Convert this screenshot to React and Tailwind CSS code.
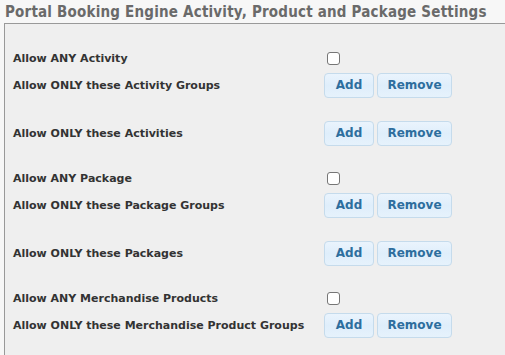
const rows = [
  { label: 'Allow ANY Activity', type: 'check' },
  { label: 'Allow ONLY these Activity Groups', type: 'buttons' },
  { spacer: true },
  { label: 'Allow ONLY these Activities', type: 'buttons' },
  { spacer: true },
  { label: 'Allow ANY Package', type: 'check' },
  { label: 'Allow ONLY these Package Groups', type: 'buttons' },
  { spacer: true },
  { label: 'Allow ONLY these Packages', type: 'buttons' },
  { spacer: true },
  { label: 'Allow ANY Merchandise Products', type: 'check' },
  { label: 'Allow ONLY these Merchandise Product Groups', type: 'buttons' },
]

const Btn = ({ children, w }) => (
  <button
    className={`${w} h-[25px] rounded-[4px] border border-[#c5dbec] bg-gradient-to-b from-[#eaf4fd] via-[#dfeefb] to-[#e6f2fc] text-[12px] font-bold text-[#2e6e9e]`}
  >
    {children}
  </button>
)

export default function App() {
  return (
    <div className="h-[355px] w-[505px] overflow-hidden bg-[#f7f7f7] font-['DejaVu_Sans',Verdana,sans-serif]">
      <h2 className="h-[23px] whitespace-nowrap pl-[5px] pt-[3px] font-['DejaVu_Sans_Condensed','DejaVu_Sans',sans-serif] text-[15px] leading-[18px] font-bold tracking-[0.2px] text-[#6a6a6a]">
        Portal Booking Engine Activity, Product and Package Settings
      </h2>
      <div className="ml-[4px] w-[600px] border-t border-l border-[#999] bg-[#efefef] pl-[8px] pt-[22px] pb-10">
        {rows.map((r, i) =>
          r.spacer ? (
            <div key={i} className="h-[18px]" />
          ) : (
            <div key={i} className={`flex items-center ${r.type === 'check' ? 'h-[24px]' : 'h-[30px]'}`}>
              <div className="w-[311px] pt-[3px] text-[11px] font-bold text-[#333]">{r.label}</div>
              {r.type === 'check' ? (
                <span className="ml-[3px] mt-[1px] h-[13px] w-[13px] rounded-[3px] border border-[#767676] bg-white" />
              ) : (
                <div className="flex gap-[3px]">
                  <Btn w="w-[50px]">Add</Btn>
                  <Btn w="w-[75px]">Remove</Btn>
                </div>
              )}
            </div>
          )
        )}
      </div>
    </div>
  )
}
